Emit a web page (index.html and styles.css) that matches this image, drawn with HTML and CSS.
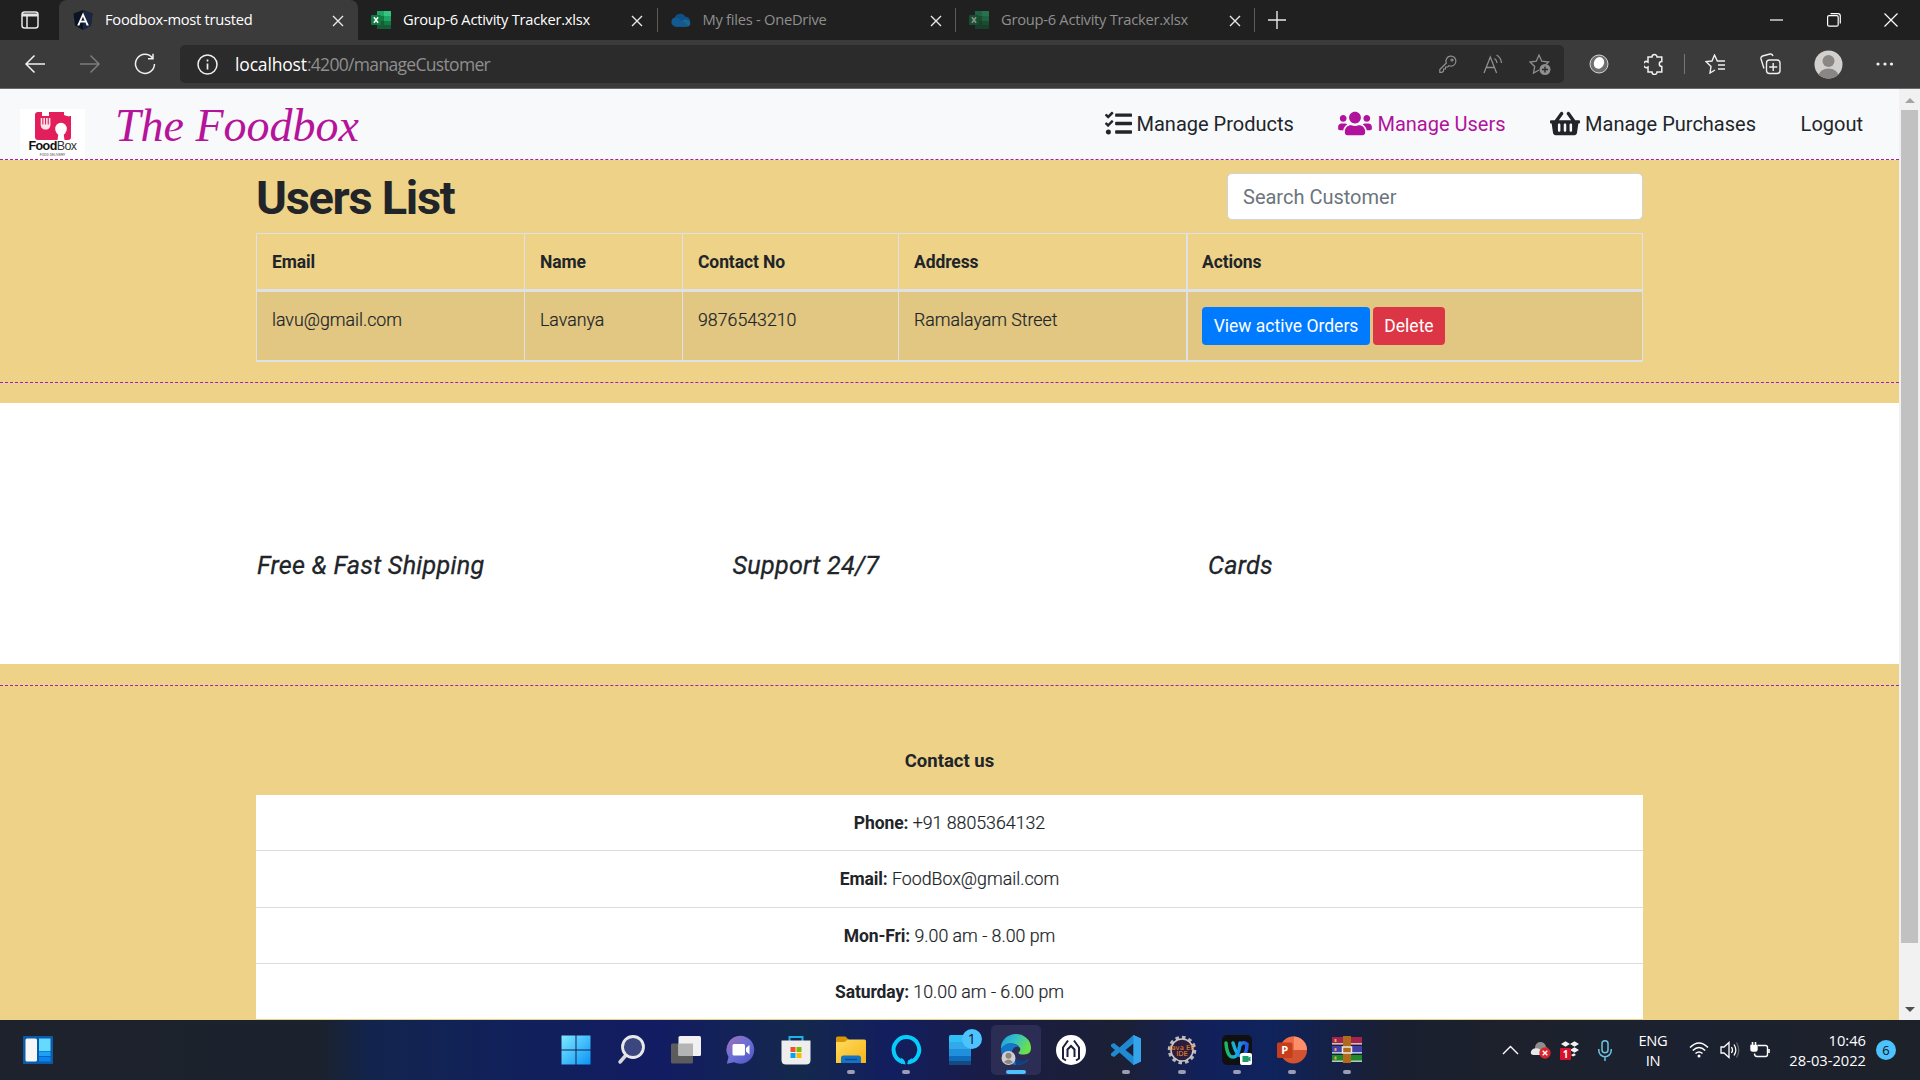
FILE: index.html
```
<!DOCTYPE html>
<html lang="en">
<head>
<meta charset="utf-8">
<title>Foodbox-most trusted</title>
<link rel="stylesheet" href="styles.css">
</head>
<body>
<svg class="defs" width="0" height="0">
  <defs>
    <symbol id="close" viewBox="0 0 12 12"><path d="M1 1l10 10M11 1L1 11" fill="none" stroke="#e8e8e8" stroke-width="1.4"/></symbol>
    <symbol id="excel" viewBox="0 0 20 20">
      <path d="M6 1h7v5H6z" fill="#21a366"/><path d="M13 1h7v5h-7z" fill="#33c481"/>
      <path d="M6 6h7v5H6z" fill="#107c41"/><path d="M13 6h7v5h-7z" fill="#21a366"/>
      <path d="M6 11h14v8H6z" fill="#185c37"/><path d="M13 11h7v4h-7z" fill="#107c41"/>
      <rect y="5" width="10" height="10" rx="1" fill="#107c41"/>
      <path d="M2.9 7.3l4.2 5.5M7.1 7.3l-4.2 5.5" stroke="#fff" stroke-width="1.5"/>
    </symbol>
    <linearGradient id="win" x1="0" y1="0" x2="1" y2="1"><stop offset="0" stop-color="#7deaff"/><stop offset="1" stop-color="#0a93f5"/></linearGradient>
    <linearGradient id="chat" x1="0" y1="0" x2="1" y2="1"><stop offset="0" stop-color="#a56fb4"/><stop offset=".5" stop-color="#6a6fd6"/><stop offset="1" stop-color="#4f52c4"/></linearGradient>
    <linearGradient id="folder" x1="0" y1="0" x2="1" y2="1"><stop offset="0" stop-color="#ffdc60"/><stop offset="1" stop-color="#f7b416"/></linearGradient>
    <linearGradient id="edgeTop" x1="0" y1="0" x2="1" y2=".4"><stop offset="0" stop-color="#1a9fe0"/><stop offset=".5" stop-color="#35c1c8"/><stop offset="1" stop-color="#6be04b"/></linearGradient>
    <linearGradient id="ring" x1="0" y1="0" x2="1" y2="0"><stop offset="0" stop-color="#1db954"/><stop offset=".45" stop-color="#14b0e8"/><stop offset="1" stop-color="#2058f0"/></linearGradient>
  </defs>
</svg>

<header class="tabstrip">
  <div class="tab-menu">
    <svg width="18" height="18" viewBox="0 0 18 18" fill="none" stroke="#e6e6e6" stroke-width="1.5"><rect x="1" y="1" width="16" height="16" rx="2.5"/><path d="M1 4h16" stroke-width="3"/><path d="M6 5v12"/></svg>
  </div>
  <div class="tab tab-active">
    <svg width="20" height="20" viewBox="0 0 20 20"><path d="M10 0l9.5 3.4-1.5 12.2L10 20l-8-4.4L.5 3.4z" fill="#0c1424"/><path d="M10 0l9.5 3.4-1.5 12.2L10 20z" fill="#1b2740"/><path d="M10 2.6L4.2 15.4h2.2L7.5 12.6h5l1.1 2.8h2.2zm0 4.1l1.7 4.1H8.3z" fill="#fff"/></svg>
    <span class="tab-title">Foodbox-most trusted</span>
    <svg class="tab-close" width="12" height="12"><use href="#close"/></svg>
  </div>
  <div class="tab">
    <svg width="20" height="20"><use href="#excel"/></svg>
    <span class="tab-title">Group-6 Activity Tracker.xlsx</span>
    <svg class="tab-close" width="12" height="12"><use href="#close"/></svg>
  </div>
  <div class="tab tab-idle">
    <svg width="20" height="20" viewBox="0 0 20 20"><path d="M5 16.5A4.6 4.6 0 0 1 3.6 8 6 6 0 0 1 14.5 6.8A5 5 0 0 1 16 16.5z" fill="#0f4f86"/><path d="M3.5 16.2L13 9.5a5 5 0 0 1 6.3 4.5q-.5 2.5-3.3 2.5H5z" fill="#1c658f"/><path d="M.4 12A4.3 4.3 0 0 1 7 8.2L17 15l-1 1.5H5A4.3 4.3 0 0 1 .4 12z" fill="#125a90"/></svg>
    <span class="tab-title">My files - OneDrive</span>
    <svg class="tab-close" width="12" height="12"><use href="#close"/></svg>
  </div>
  <div class="tab tab-idle">
    <svg class="faded" width="20" height="20"><use href="#excel"/></svg>
    <span class="tab-title">Group-6 Activity Tracker.xlsx</span>
    <svg class="tab-close" width="12" height="12"><use href="#close"/></svg>
  </div>
  <i class="tab-end"></i>
  <svg class="tab-new" width="18" height="18" viewBox="0 0 18 18"><path d="M9 0v18M0 9h18" stroke="#e8e8e8" stroke-width="1.4"/></svg>
  <div class="window-buttons">
    <svg width="14" height="14" viewBox="0 0 14 14"><path d="M0 7h13" stroke="#fff" stroke-width="1.2"/></svg>
    <svg width="14" height="14" viewBox="0 0 14 14" fill="none" stroke="#fff" stroke-width="1.2"><rect x=".6" y="2.6" width="10.6" height="10.6" rx="1.5"/><path d="M3.5.6h7.5a2.3 2.3 0 0 1 2.3 2.3v7.5"/></svg>
    <svg width="14" height="14" viewBox="0 0 14 14"><path d="M.5.5l13 13M13.5.5l-13 13" stroke="#fff" stroke-width="1.2"/></svg>
  </div>
</header>

<div class="toolbar">
  <div class="nav-buttons">
    <svg width="22" height="20" viewBox="0 0 22 20" fill="none" stroke="#f0f0f0" stroke-width="1.5"><path d="M21 10H2M10.5 1.500L2 10l8.500 8.500"/></svg>
    <svg width="22" height="20" viewBox="0 0 22 20" fill="none" stroke="#7c7c7c" stroke-width="1.5"><path d="M1 10h19M11.5 1.500L20 10l-8.500 8.500"/></svg>
    <svg width="22" height="22" viewBox="0 0 22 22" fill="none" stroke="#f0f0f0" stroke-width="1.5"><path d="M18.5 5A9.500 9.500 0 1 0 20.500 11M19 .8V5.700H14"/></svg>
  </div>
  <div class="address">
    <svg width="21" height="21" viewBox="0 0 21 21" fill="none" stroke="#f0f0f0" stroke-width="1.5"><circle cx="10.5" cy="10.5" r="9.5"/><path d="M10.5 9.500v6M10.500 5.500v2" stroke-width="1.7"/></svg>
    <span class="url"><span class="host">localhost</span>:4200/manageCustomer</span>
    <div class="address-actions">
      <svg width="18" height="18" viewBox="0 0 18 18" fill="none" stroke="#8f8f8f" stroke-width="1.2"><path d="M7.3 8A5 5 0 1 1 10 10.700L8.500 12H6.500v2H4.500v2.200L3 17.300H.8v-2.800z"/><circle cx="13" cy="5" r="1"/></svg>
      <svg width="20" height="20" viewBox="0 0 20 20" fill="none" stroke="#8f8f8f" stroke-width="1.3"><path d="M1 19L7.300 3l6.300 16M3.200 13.500h8.200M11.500 4.500q2.300 1.500 2.500 4.500M13.500 1q4.500 2.500 5 8"/></svg>
      <svg width="22" height="22" viewBox="0 0 22 22" fill="none" stroke="#8f8f8f" stroke-width="1.3"><path d="M10 17l-5.500 3 1.200-6.500L1 9l6.300-.8L10 2l2.800 6.200 6.700.8-2.300 2.200"/><circle cx="16" cy="16.5" r="5.500" fill="#8f8f8f" stroke="none"/><path d="M16 13.500v6M13 16.500h6" stroke="#2b2b2b" stroke-width="1.4"/></svg>
    </div>
  </div>
  <div class="extensions">
    <svg width="20" height="20" viewBox="0 0 20 20"><circle cx="10" cy="10" r="9" fill="#6e6e6e" stroke="#d5d5d5"/><ellipse cx="9.5" cy="9" rx="5" ry="6" fill="#fff" transform="rotate(25 10 10)"/></svg>
    <svg class="ext-puzzle" width="20" height="22" viewBox="0 0 20 22" fill="none" stroke="#f0f0f0" stroke-width="1.5"><path d="M4 4h4a2.500 2.500 0 1 1 5 0h4.800v4.500a2.500 2.500 0 1 0 0 5V19H13a2.500 2.500 0 0 1-5 0H4v-5a3 3 0 1 1 0-5z"/></svg>
    <i class="toolbar-divider"></i>
    <svg width="21" height="20" viewBox="0 0 21 20" fill="none" stroke="#f0f0f0" stroke-width="1.4"><path d="M10 16l-5 3 1-6.500L1 7.500 7 7l2.500-6L12.300 7H20M13 11h7M13 15h7"/></svg>
    <svg class="ext-collections" width="21" height="22" viewBox="0 0 21 22" fill="none" stroke="#f0f0f0" stroke-width="1.4"><rect x="6.5" y="7" width="13.5" height="13.5" rx="3"/><path d="M13.200 10v8M9.200 14h8M4 15.500L1 6q-.5-2 1.500-3L10 1q2.300-.5 3 2"/></svg>
    <svg class="ext-profile" width="29" height="29" viewBox="0 0 29 29"><clipPath id="av"><circle cx="14.5" cy="14.5" r="14"/></clipPath><circle cx="14.5" cy="14.5" r="14" fill="#d2d0ce"/><g clip-path="url(#av)" fill="#8a8683"><circle cx="14.5" cy="11" r="6"/><ellipse cx="14.5" cy="26" rx="10" ry="7.5"/></g></svg>
    <svg class="ext-more" width="18" height="4" viewBox="0 0 18 4" fill="#f0f0f0"><circle cx="2" cy="2" r="1.6"/><circle cx="9" cy="2" r="1.6"/><circle cx="15.5" cy="2" r="1.6"/></svg>
  </div>
</div>

<div class="viewport">
  <main class="page">
    <nav class="navbar">
      <div class="logo">
        <svg width="38" height="28" viewBox="0 0 38 28"><path d="M4 0h26v3q4 2 7 .5V25q0 3-3 3H4q-3 0-3-3V3q0-3 3-3z" fill="#e21f5c"/><path d="M23 0h8v3q3 2 7 .5V0z" fill="#fff"/><path d="M8 0h7v4H8z" fill="#fff"/><path d="M7.500 6v7M10.200 6v7M12.900 6v7M15.600 6v7" stroke="#fbe3ea" stroke-width="1.6"/><path d="M6.700 12.500h9.700q0 4-3.200 5H10q-3.300-1-3.300-5z" fill="#fbe3ea"/><ellipse cx="27" cy="17" rx="5.800" ry="6.300" fill="#fff"/><path d="M24.500 21h5l1 7h-7z" fill="#fff"/></svg>
        <span class="logo-name"><b>Food</b>Box</span>
        <span class="logo-tag">FOOD DELIVERY</span>
      </div>
      <span class="brand">The Foodbox</span>
      <div class="nav-links">
        <a class="nav-link"><svg width="27" height="27" viewBox="0 0 512 512"><path d="M139.610 35.500a12 12 0 0 0-17 0L58.930 98.810l-22.700-22.120a12 12 0 0 0-17 0L3.530 92.410a12 12 0 0 0 0 17l47.590 47.400a12.780 12.780 0 0 0 17.610 0l15.590-15.620L156.520 69a12.090 12.090 0 0 0 .09-17zm0 159.190a12 12 0 0 0-17 0l-63.680 63.720-22.700-22.100a12 12 0 0 0-17 0L3.530 252a12 12 0 0 0 0 17L51 316.500a12.770 12.770 0 0 0 17.600 0l15.700-15.690 72.200-72.220a12 12 0 0 0 .09-16.900zM64 368c-26.490 0-48.590 21.500-48.590 48S37.530 464 64 464a48 48 0 0 0 0-96zm432 16H208a16 16 0 0 0-16 16v32a16 16 0 0 0 16 16h288a16 16 0 0 0 16-16v-32a16 16 0 0 0-16-16zm0-320H208a16 16 0 0 0-16 16v32a16 16 0 0 0 16 16h288a16 16 0 0 0 16-16V80a16 16 0 0 0-16-16zm0 160H208a16 16 0 0 0-16 16v32a16 16 0 0 0 16 16h288a16 16 0 0 0 16-16v-32a16 16 0 0 0-16-16z"/></svg><span>Manage Products</span></a>
        <a class="nav-link nav-current"><svg width="34" height="27" viewBox="0 0 640 512"><path d="M96 224c35.300 0 64-28.700 64-64s-28.700-64-64-64-64 28.700-64 64 28.700 64 64 64zm448 0c35.300 0 64-28.700 64-64s-28.700-64-64-64-64 28.700-64 64 28.700 64 64 64zm32 32h-64c-17.600 0-33.500 7.100-45.100 18.600 40.300 22.100 68.900 62 75.100 109.400h66c17.700 0 32-14.300 32-32v-32c0-35.300-28.700-64-64-64zm-256 0c61.900 0 112-50.100 112-112S381.900 32 320 32 208 82.100 208 144s50.100 112 112 112zm76.800 32h-8.300c-20.800 10-43.900 16-68.500 16s-47.600-6-68.500-16h-8.300C179.600 288 128 339.600 128 403.200V432c0 26.500 21.500 48 48 48h288c26.500 0 48-21.500 48-48v-28.800c0-63.600-51.600-115.200-115.200-115.200zm-223.700-13.400C161.500 263.100 145.600 256 128 256H64c-35.300 0-64 28.700-64 64v32c0 17.700 14.300 32 32 32h65.900c6.300-47.400 34.900-87.300 75.200-109.400z"/></svg><span>Manage Users</span></a>
        <a class="nav-link"><svg width="30" height="27" viewBox="0 0 576 512"><path d="M576 216v16c0 13.255-10.745 24-24 24h-8l-26.113 182.788C514.509 462.435 494.257 480 470.370 480H105.630c-23.887 0-44.139-17.565-47.518-41.212L32 256h-8c-13.255 0-24-10.745-24-24v-16c0-13.255 10.745-24 24-24h67.341l106.780-146.821c10.395-14.292 30.407-17.453 44.701-7.058 14.293 10.395 17.453 30.408 7.058 44.701L170.477 192h235.046L326.120 82.821c-10.395-14.292-7.234-34.306 7.059-44.701 14.291-10.395 34.306-7.235 44.701 7.058L484.659 192H552c13.255 0 24 10.745 24 24zM312 392V280c0-13.255-10.745-24-24-24s-24 10.745-24 24v112c0 13.255 10.745 24 24 24s24-10.745 24-24zm112 0V280c0-13.255-10.745-24-24-24s-24 10.745-24 24v112c0 13.255 10.745 24 24 24s24-10.745 24-24zm-224 0V280c0-13.255-10.745-24-24-24s-24 10.745-24 24v112c0 13.255 10.745 24 24 24s24-10.745 24-24z"/></svg><span>Manage Purchases</span></a>
        <a class="nav-link"><span>Logout</span></a>
      </div>
    </nav>

    <section class="users">
      <div class="container">
        <div class="users-head">
          <h1>Users List</h1>
          <input class="search" type="text" placeholder="Search Customer">
        </div>
        <table class="users-table">
          <colgroup><col class="col-email"><col class="col-name"><col class="col-contact"><col class="col-address"><col></colgroup>
          <thead><tr><th>Email</th><th>Name</th><th>Contact No</th><th>Address</th><th>Actions</th></tr></thead>
          <tbody><tr><td>lavu@gmail.com</td><td>Lavanya</td><td>9876543210</td><td>Ramalayam Street</td><td><div class="actions"><button class="btn btn-primary">View active Orders</button><button class="btn btn-danger">Delete</button></div></td></tr></tbody>
        </table>
      </div>
    </section>

    <section class="features">
      <div class="container features-row">
        <h4>Free &amp; Fast Shipping</h4><h4>Support 24/7</h4><h4>Cards</h4>
      </div>
    </section>

    <section class="contact">
      <div class="container">
        <h5>Contact us</h5>
        <ul class="contact-list">
          <li><b>Phone:</b> +91 8805364132</li>
          <li><b>Email:</b> FoodBox@gmail.com</li>
          <li><b>Mon-Fri:</b> 9.00 am - 8.00 pm</li>
          <li><b>Saturday:</b> 10.00 am - 6.00 pm</li>
        </ul>
      </div>
    </section>
  </main>
  <div class="scrollbar"><i class="arrow-up"></i><i class="thumb"></i><i class="arrow-down"></i></div>
</div>

<footer class="taskbar">
  <div class="widgets"><svg width="30" height="28" viewBox="0 0 30 28"><rect width="30" height="28" rx="1" fill="#0a5cab"/><rect x="2.5" y="2.5" width="11.5" height="23" rx="1.5" fill="#f6f6f6"/><path d="M16 2.500h11.500V15H16z" fill="#66d9ff"/><path d="M16 15.500h11.500V20H16z" fill="#1f9ff5"/><path d="M16 20.800h11.500v4.700H16z" fill="#0a84ee"/></svg></div>
  <div class="apps">
    <div class="app"><svg viewBox="0 0 30 30"><path d="M.5.5h14v14H.5zM15.500.5h14v14h-14zM.5 15.500h14v14H.5zM15.500 15.500h14v14h-14z" fill="url(#win)"/></svg></div>
    <div class="app"><svg viewBox="0 0 30 30"><path d="M11 19l-7 8" stroke="#d8d8d8" stroke-width="3.5" stroke-linecap="round"/><circle cx="17" cy="12" r="10.5" fill="#3d477f" stroke="#e8e8e8" stroke-width="2.8"/></svg></div>
    <div class="app"><svg viewBox="0 0 30 30"><rect y="8.5" width="22" height="20" rx="1.5" fill="#5c5c5c"/><rect x="7.5" y="1" width="22.5" height="20" rx="1.5" fill="#f1f1f1"/><path d="M7.500 8.500H22V21H7.500z" fill="#b4b4b4"/></svg></div>
    <div class="app"><svg viewBox="0 0 30 30"><path d="M15 .8A14 14 0 1 1 8 27.300L.8 28.800 2.500 22A14 14 0 0 1 15 .8z" fill="url(#chat)"/><rect x="6.5" y="9" width="12.5" height="11.5" rx="1.5" fill="#fff"/><path d="M20 13l3.500-3v9.500L20 16.500z" fill="#fff"/></svg></div>
    <div class="app"><svg viewBox="0 0 30 30"><path d="M8.500 7V2h13v5" fill="none" stroke="#1fb0ea" stroke-width="2"/><path d="M.5 5.500h29V25q0 4.500-4.500 4.500H5Q.5 29.500.5 25z" fill="#eee"/><path d="M9.500 12h5v5h-5z" fill="#f25022"/><path d="M15.500 12h5v5h-5z" fill="#7fba00"/><path d="M9.500 18h5v5h-5z" fill="#00a4ef"/><path d="M15.500 18h5v5h-5z" fill="#ffb900"/></svg></div>
    <div class="app running"><svg viewBox="0 0 30 30"><path d="M0 3q0-1.500 1.500-1.500h8L13 5v5H0z" fill="#d99605"/><path d="M0 7h8.500L12 4.500h16.500Q30 4.500 30 6v22H0z" fill="url(#folder)"/><path d="M5 28v-5q0-2.500 2.500-2.500h15Q25 20.500 25 23v5z" fill="#1573c4"/><path d="M9 24.500h12" stroke="#0b4a8c" stroke-width="1.3"/></svg></div>
    <div class="app running"><svg viewBox="0 0 30 30"><path d="M11.500 27A12.800 12.800 0 1 1 17 27.500" fill="none" stroke="#05cdfb" stroke-width="4"/><path d="M10 23q4 1 4.500 6.500L10 28.500zM16 29q1-4 5-6l-1 5z" fill="#05cdfb"/></svg></div>
    <div class="app phone"><svg viewBox="0 0 30 30"><rect x="3" width="22" height="30" rx="1.5" fill="#2fc0f5"/><path d="M3 7h22v7H3z" fill="#31a9ea"/><path d="M3 14h22v7H3z" fill="#2090dc"/><path d="M3 21h22v5H3z" fill="#0d6cbb"/><path d="M3 26h22v4H3z" fill="#164a7e"/></svg><span class="count">1</span></div>
    <div class="app edge"><svg viewBox="0 0 30 30"><path d="M0 14A15 14 0 0 1 30 12q.5 7-6.500 7.500-6 .5-6-2 2.500-2 1.500-4.500Q16.500 8.500 11 8.500 4 8.500 0 14z" fill="url(#edgeTop)"/><path d="M0 14Q4 7.500 11 8.500q5 .5 7 3.500-5-1.500-7 4-1 7 5 10 6 2 12-2-4 6-12.500 6Q0 28.500 0 14z" fill="#1276c9"/><path d="M13 22q5 6.500 15 2-4.500 6.500-13 6z" fill="#103f88"/><circle cx="7.5" cy="23" r="7" fill="#d0cecc"/><circle cx="7.5" cy="20.8" r="3" fill="#8a8683"/><path d="M3 27q4.500-5 9 0-4.500 4-9 0z" fill="#8a8683"/></svg></div>
    <div class="app"><svg viewBox="0 0 30 30"><circle cx="15" cy="15" r="15" fill="#fff"/><path d="M10 25.500l-3-2V12.500l5-7M20 25.500l3-2V12.500l-5-7M11.500 22v-7.500l3.500-3.500 3.500 3.500V22" fill="none" stroke="#1d1f3f" stroke-width="2"/></svg></div>
    <div class="app running"><svg viewBox="0 0 30 30"><path d="M22.500 0L30 3.500v23L22.500 30 8.500 17.500 3 22 0 20.500v-2L4 15 0 11.500v-2L3 8l5.500 4.500zM22.500 8.500L14.500 15l8 6.500z" fill="#1f8ad2" fill-rule="evenodd"/><path d="M22.500 0L30 3.500v23L22.500 30z" fill="#35a4ea"/></svg></div>
    <div class="app running"><svg viewBox="0 0 30 30"><circle cx="15" cy="15" r="12.5" fill="none" stroke="#b9b9b9" stroke-width="3.5" stroke-dasharray="3.5 3"/><circle cx="15" cy="15" r="11" fill="#2b1d3c" stroke="#c8c8c8" stroke-width="1.5"/><text x="15" y="14.5" class="ide-text">Java EE</text><text x="15" y="21" class="ide-text">IDE</text></svg></div>
    <div class="app running"><svg viewBox="0 0 30 30"><rect width="30" height="30" rx="5" fill="#101010"/><path d="M4 8q1 14 7 14t7-14M11 8q4 14 9 13 5-2 5-12-5-4-8 4" fill="none" stroke="url(#ring)" stroke-width="3.5" stroke-linecap="round"/><rect x="18" y="18" width="12" height="12" rx="2" fill="#fff"/><path d="M20.500 21h6v6h-6zM26 23l2.500-1.500v5L26 25z" fill="#1c9e6c"/></svg></div>
    <div class="app running"><svg viewBox="0 0 30 30"><circle cx="16.5" cy="15" r="13.5" fill="#d35230"/><path d="M16.500 1.500A13.500 13.500 0 0 1 30 15H16.500z" fill="#ff8f6b"/><path d="M16.500 1.500V15H3A13.500 13.500 0 0 1 16.500 1.500z" fill="#ed6c47"/><rect y="7.5" width="15.5" height="15.5" rx="1.5" fill="#c43e1c"/><text x="7.8" y="19.2" class="ppt-text">P</text></svg></div>
    <div class="app running"><svg viewBox="0 0 30 30"><path d="M0 2h30v8H0z" fill="#a8224e"/><path d="M0 11h30v8H0z" fill="#4040a8"/><path d="M0 20h30v7H0z" fill="#1e8a2c"/><path d="M0 8h30v1.500H0zM0 17h30v1.500H0zM0 25.500h30V27H0z" fill="#b9c8c0"/><path d="M2.500 4h2v3h-2zM2.500 13h2v3h-2zM2.500 21.500h2v3h-2z" fill="#e0b040"/><path d="M11 1h8v27h-8z" fill="#b06a1c"/><rect x="10.5" y="12" width="9" height="6" fill="none" stroke="#e8e8e8" stroke-width="1.5"/></svg></div>
  </div>
  <div class="tray">
    <div class="slot slot-s"><svg width="17" height="10" viewBox="0 0 17 10"><path d="M1 9l7.500-7.500L16 9" fill="none" stroke="#fff" stroke-width="1.4"/></svg></div>
    <div class="slot slot-s"><svg width="21" height="18" viewBox="0 0 21 18"><path d="M5 13V7a5.500 5.500 0 0 1 11-1q3 1 3 5z" fill="#8e8e8e"/><path d="M1 13q-1-4 3-5.500 5-1 6.500 1.500L17 14H3z" fill="#e8e8e8"/><circle cx="15" cy="12" r="5.7" fill="#d9262c"/><path d="M12.700 9.700l4.600 4.600M17.300 9.700l-4.600 4.600" stroke="#fff" stroke-width="1.4"/></svg></div>
    <div class="slot slot-m drop"><svg width="20" height="20" viewBox="0 0 20 20"><path d="M1 4l4.500-2.700L10 4 5.500 6.700zM10 4l4.500-2.700L19 4l-4.500 2.700zM10 10l4.500-2.700L19 10l-4.500 2.700zM11 15l3-1.700L16 15l-3 1.500z" fill="#f2f2f2"/><rect y="8" width="11" height="12" rx="1" fill="#d8102a"/><text x="5.5" y="17.5" class="drop-text">1</text></svg></div>
    <div class="slot slot-l"><svg width="14" height="21" viewBox="0 0 14 21" fill="none" stroke="#6cc4e0" stroke-width="1.5"><rect x="4" y=".8" width="6" height="12" rx="3"/><path d="M.8 9v1.500a6.200 6.200 0 0 0 12.400 0V9M7 16.500V21"/></svg></div>
    <div class="lang"><span>ENG</span><span>IN</span></div>
    <div class="slot slot-m"><svg width="20" height="16" viewBox="0 0 20 16" fill="none" stroke="#fff" stroke-width="1.5"><path d="M1 5.500q9-9 18 0M3.800 8.500q6.200-6 12.400 0M6.500 11.500q3.500-3 7 0"/><circle cx="10" cy="14" r="1.5" fill="#fff" stroke="none"/></svg></div>
    <div class="slot slot-s"><svg width="20" height="18" viewBox="0 0 20 18" fill="none" stroke="#fff" stroke-width="1.3"><path d="M1 6h3l5-4.500v15L4 12H1zM11.500 6q2 3 0 6M14 3.500q3.700 5.500 0 11"/><path d="M16.500 1.500q4.500 7.500 0 15" stroke="#666"/></svg></div>
    <div class="slot slot-s"><svg width="20" height="17" viewBox="0 0 20 17" fill="none" stroke="#fff" stroke-width="1.4"><path d="M8 3.500h7.500q2 0 2 2v7q0 2-2 2H7q-2.500 0-2.500-3"/><path d="M1 3.500h6v4Q7 9 5.500 9h-3Q1 9 1 7.500z" fill="#fff"/><path d="M2.500 3V0M5.500 3V0M19 7v4" stroke-width="1.6"/></svg></div>
    <div class="clock"><span>10:46</span><span>28-03-2022</span></div>
    <span class="notify">6</span>
  </div>
</footer>
</body>
</html>
```
FILE: styles.css
```
* { box-sizing: border-box; }
body { margin: 0; width: 1920px; height: 1080px; overflow: hidden; font-family: Roboto, sans-serif; color: #212529; display: flex; flex-direction: column; }
svg { display: block; flex: none; }
.defs { position: absolute; }

/* Browser chrome */
.tabstrip, .toolbar, .taskbar { font-family: "Open Sans", sans-serif; flex: none; }
.tabstrip { height: 40px; background: #202020; display: flex; align-items: stretch; color: #fff; }
.tab-menu { width: 59px; display: flex; align-items: center; padding-left: 21px; }
.tab { width: 298.5px; display: flex; align-items: center; padding: 0 14px 0 13px; font-size: 14.7px; letter-spacing: -.26px; gap: 12px; }
.tab-active { width: 299px; background: #3b3b3b; border-radius: 8px 8px 0 0; padding-left: 14px; }
.tab-idle { padding: 0 13px 0 14px; color: #8f8f8f; background: linear-gradient(#5c5c5c, #5c5c5c) no-repeat 0 8px / 1px 24px; }
.tab-title { flex: 1; white-space: nowrap; padding-bottom: 2px; }
.tab-close { margin-top: 2px; }
.tab-end { width: 1px; height: 24px; margin-top: 8px; background: #5c5c5c; }
.faded { opacity: .5; }
.tab-new { align-self: center; margin-left: 13px; }
.window-buttons { margin-left: auto; display: flex; align-items: center; gap: 43px; padding-right: 22px; }
.toolbar { height: 49px; background: #3b3b3b; border-bottom: 1px solid #6b6b6b; display: flex; align-items: center; }
.nav-buttons { width: 180px; display: flex; align-items: center; gap: 33px; padding-left: 24px; }
.address { width: 1384px; height: 38px; background: #2b2b2b; border-radius: 5px; display: flex; align-items: center; padding: 0 13px 0 17px; gap: 17px; }
.url { flex: 1; font-size: 17.5px; letter-spacing: -.68px; color: #8f8f8f; padding-bottom: 1px; }
.host { color: #fff; letter-spacing: -.16px; }
.address-actions { display: flex; align-items: center; gap: 26px; }
.extensions { flex: 1; display: flex; align-items: center; padding-left: 25px; }
.ext-puzzle { margin-left: 35px; }
.toolbar-divider { width: 1px; height: 20px; background: #777; margin: 0 20px; }
.ext-collections { margin-left: 34px; }
.ext-profile { margin-left: 33px; }
.ext-more { margin-left: 33px; }

/* Page */
.viewport { height: 931px; display: flex; overflow: hidden; }
.page { width: 1899px; background: #fff; }
.container { width: 1387px; margin-left: 256px; }
.navbar { height: 71px; background: #f8f9fb; border-bottom: 1px dashed #a01cc4; display: flex; align-items: center; padding-left: 20px; }
.logo { width: 65px; height: 50px; align-self: flex-end; background: #fff; display: flex; flex-direction: column; align-items: center; padding-top: 3px; }
.logo-name { font: 12.5px/13px "Liberation Sans", sans-serif; letter-spacing: -.6px; color: #333; }
.logo-name b { color: #111; }
.logo-tag { font-size: 3.5px; line-height: 4px; color: #555; }
.brand { font: italic 46px/50px "Liberation Serif", cursive; color: #b5149a; margin: 4px 0 0 30px; white-space: nowrap; }
.nav-links { margin-left: auto; display: flex; align-items: center; gap: 44.6px; padding-right: 36px; }
.nav-link { display: flex; align-items: center; gap: 5px; font-size: 20px; fill: currentColor; white-space: nowrap; }
.nav-link svg { margin-top: -2px; }
.nav-current { color: #b0129b; }
.users { height: 243px; background: #edd287; }
.users-head { height: 73px; display: flex; align-items: center; justify-content: space-between; }
h1 { margin: 3px 0 0; font-size: 47px; line-height: 56px; font-weight: 700; letter-spacing: -1.3px; }
.search { width: 416px; height: 47px; border: 1px solid #ced4da; border-radius: 5px; padding: 0 15px; font: 20px Roboto, sans-serif; background: #fff; }
.search::placeholder { color: #6c757d; opacity: 1; }
.users-table { width: 1387px; height: 129px; table-layout: fixed; border-collapse: separate; border-spacing: 0; border: 1px solid #dee2e6; border-width: 1px 1px 0 0; font-size: 17.75px; }
.users-table th, .users-table td { border-left: 1px solid #dee2e6; padding: 0 15px; text-align: left; }
.users-table th { height: 58px; font-weight: 700; font-size: 17.5px; letter-spacing: -.1px; border-bottom: 3px solid #dee2e6; }
.users-table td { height: 70px; font-weight: 300; -webkit-text-stroke: .2px currentColor; background: #e1c781; border-bottom: 2px solid #dee2e6; vertical-align: top; padding-top: 16px; line-height: 24px; }
.users-table tr > :last-child { border-left-width: 2px; }
.users-table tr > :last-child { padding-left: 14px; }
.users-table td:last-child { padding-top: 15px; -webkit-text-stroke: 0; }
.col-email { width: 268px; } .col-name { width: 158px; } .col-contact { width: 216px; } .col-address { width: 288px; }
.actions { display: flex; gap: 3px; }
.btn { height: 38px; border: 0; border-radius: 4px; padding: 0; color: #fff; font: 17.5px Roboto, sans-serif; white-space: nowrap; }
.btn-primary { background: #007bff; width: 168px; }
.btn-danger { background: #dc3545; width: 72px; }
.users::after { content: ""; display: block; margin-top: 20px; border-top: 1px dashed #a01cc4; }
.features { height: 261px; background: #fff; }
.features-row { display: flex; padding-top: 145px; }
h4 { margin: 0; flex: none; width: 475.5px; font: italic 400 25.2px/34px Roboto, sans-serif; letter-spacing: .25px; padding: 1px 0 0 1px; -webkit-text-stroke: .3px currentColor; }
.contact { height: 376px; background: #edd287; }
.contact::before { content: ""; display: block; height: 21px; border-bottom: 1px dashed #a01cc4; }
.contact::before { height: 20.5px; }
h5 { margin: 0; padding-top: 62px; height: 109.5px; text-align: center; font-size: 18.5px; line-height: 26px; font-weight: 700; }
.contact-list { margin: 0; padding: 0; list-style: none; background: #fff; text-align: center; font-size: 17.75px; font-weight: 300; -webkit-text-stroke: .2px currentColor; }
.contact-list li { height: 56.25px; line-height: 56px; border-top: 1px solid #dcdcdc; }
.contact-list li:first-child { border-top: 0; height: 55.25px; }
.contact-list b { font-weight: 700; font-size: 17.5px; letter-spacing: -.1px; -webkit-text-stroke: 0; }
.scrollbar { width: 21px; background: #f1f1f1; display: flex; flex-direction: column; align-items: center; }
.arrow-up { border: 5px solid transparent; border-top: 0; border-bottom-color: #a3a3a3; margin: 9px 0 7px; }
.thumb { width: 17px; height: 833px; background: #c1c1c1; }
.arrow-down { border: 5px solid transparent; border-bottom: 0; border-top-color: #505050; margin-top: auto; margin-bottom: 8px; }

/* Taskbar */
.taskbar { height: 60px; display: flex; align-items: center; color: #fff; background: linear-gradient(90deg, #1e222c 0, #1b222d 320px, #12244d 370px, #11215a 500px, #121c62 660px, #14284c 800px, #121e5f 890px, #1a1c42 1000px, #1c2035 1120px, #12205a 1200px, #0f235c 1270px, #1a1f31 1390px, #1c212c 1500px, #1b2130 1700px, #1d2129 1920px); }
.widgets { width: 548px; padding-left: 23px; }
.apps { display: flex; }
.app { width: 55.1px; height: 50px; position: relative; display: flex; align-items: center; justify-content: center; }
.app svg { width: 30px; height: 30px; overflow: visible; }
.running::after, .edge::after { content: ""; position: absolute; bottom: 1px; left: 50%; width: 8px; height: 4px; margin-left: -4px; border-radius: 2px; background: #9a9db4; }
.edge::after { width: 20px; margin-left: -10px; background: #4cc2ff; }
.edge::before { content: ""; position: absolute; left: 2.5px; top: 0; width: 50px; height: 50px; border-radius: 5px; background: #2c2d55; }
.edge svg { position: relative; }
.count { position: absolute; left: 28px; top: 4px; width: 20px; height: 20px; border-radius: 50%; background: #4cc2ff; color: #111; font-size: 14px; line-height: 20px; text-align: center; }
.ide-text { font: 6.8px "DejaVu Sans", sans-serif; fill: #f0862c; text-anchor: middle; }
.ppt-text { font: bold 11px "Open Sans", sans-serif; fill: #fff; text-anchor: middle; }
.drop-text { font: bold 10px "Open Sans", sans-serif; fill: #fff; text-anchor: middle; }
.drop { padding-right: 3px; }
.tray { margin-left: auto; display: flex; align-items: center; padding-right: 24px; }
.slot { display: flex; justify-content: center; }
.slot-s { width: 30px; } .slot-m { width: 32px; } .slot-l { width: 36px; }
.lang, .clock { display: flex; flex-direction: column; font-size: 14.7px; line-height: 20px; letter-spacing: -.3px; padding-bottom: 1px; }
.lang { width: 60px; align-items: center; }
.clock { width: 91px; align-items: flex-end; letter-spacing: 0; }
.notify { margin-left: 10px; width: 20px; height: 20px; border-radius: 50%; background: #4cc2ff; color: #111; font-size: 13px; line-height: 20px; text-align: center; }
```
